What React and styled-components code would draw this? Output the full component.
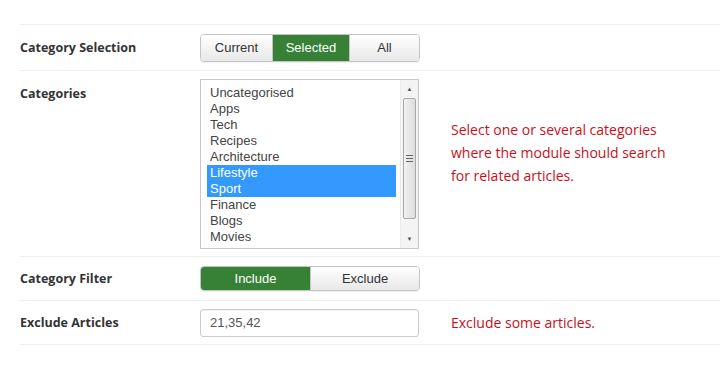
import React from "react";
import styled, { createGlobalStyle } from "styled-components";

const categories = [
  "Uncategorised",
  "Apps",
  "Tech",
  "Recipes",
  "Architecture",
  "Lifestyle",
  "Sport",
  "Finance",
  "Blogs",
  "Movies",
  "Nightlife",
];
const selected = ["Lifestyle", "Sport"];

const App = () => {
  return (
    <>
      <GlobalStyle />
      <Form>
        <Row $h={46}>
          <Label>Category Selection</Label>
          <BtnGroup $h={28}>
            <Btn $w={71}>Current</Btn>
            <Btn $w={77} $active>
              Selected
            </Btn>
            <Btn $w={70}>All</Btn>
          </BtnGroup>
        </Row>
        <Row $h={186} $tall>
          <Label $top>Categories</Label>
          <ListBox>
            <Options>
              {categories.map((c) => (
                <Option key={c} $on={selected.includes(c)}>
                  {c}
                </Option>
              ))}
            </Options>
            <ScrollBar>
              <Arrow>▲</Arrow>
              <Thumb>
                <Grip />
              </Thumb>
              <Track />
              <Arrow>▼</Arrow>
            </ScrollBar>
          </ListBox>
          <Help $multi>
            Select one or several categories
            <br />
            where the module should search
            <br />
            for related articles.
          </Help>
        </Row>
        <Row $h={44}>
          <Label>Category Filter</Label>
          <BtnGroup $h={25}>
            <Btn $w={109} $active>
              Include
            </Btn>
            <Btn $w={109}>Exclude</Btn>
          </BtnGroup>
        </Row>
        <Row $h={44}>
          <Label>Exclude Articles</Label>
          <Input defaultValue="21,35,42" />
          <Help>Exclude some articles.</Help>
        </Row>
      </Form>
    </>
  );
};

export default App;

const GlobalStyle = createGlobalStyle`
  body {
    margin: 0;
    background: #fff;
    font-family: "Liberation Sans", Arial, sans-serif;
  }
`;

const Form = styled.div`
  padding: 24px 0 0 20px;
`;

const Row = styled.div`
  display: flex;
  align-items: ${(p) => (p.$tall ? "flex-start" : "center")};
  border-top: 1px solid #eeeeee;
  height: ${(p) => p.$h}px;
  padding-top: ${(p) => (p.$tall ? "8px" : "0")};
  box-sizing: border-box;
  &:last-child {
    border-bottom: 1px solid #eeeeee;
    height: ${(p) => p.$h + 1}px;
  }
`;

const Label = styled.div`
  width: 180px;
  flex-shrink: 0;
  font-family: "Open Sans", Arial, sans-serif;
  font-weight: 700;
  font-size: 12.5px;
  color: #333;
  line-height: 18px;
  padding-top: ${(p) => (p.$top ? "6px" : "0")};
`;

const BtnGroup = styled.div`
  display: flex;
  width: 220px;
  box-sizing: border-box;
  height: ${(p) => p.$h}px;
  border: 1px solid #c4c4c4;
  border-radius: 4px;
  overflow: hidden;
  box-shadow: 0 1px 1px rgba(0, 0, 0, 0.06);
`;

const Btn = styled.div`
  width: ${(p) => p.$w}px;
  flex-shrink: 0;
  box-sizing: border-box;
  display: flex;
  align-items: center;
  justify-content: center;
  font-size: 13px;
  color: ${(p) => (p.$active ? "#fff" : "#333")};
  background: ${(p) =>
    p.$active ? "#378137" : "linear-gradient(#ffffff, #e8e8e8)"};
  & + & {
    border-left: 1px solid #c4c4c4;
  }
`;

const ListBox = styled.div`
  width: 219px;
  height: 170px;
  flex-shrink: 0;
  box-sizing: border-box;
  border: 1px solid #c8c8c8;
  display: flex;
  overflow: hidden;
`;

const Options = styled.div`
  flex: 1;
  padding: 5px 4px 0 6px;
  overflow: hidden;
`;

const Option = styled.div`
  font-size: 13px;
  line-height: 16px;
  height: 16px;
  padding-left: 3px;
  color: ${(p) => (p.$on ? "#fff" : "#444")};
  background: ${(p) => (p.$on ? "#3399ff" : "transparent")};
  white-space: nowrap;
`;

const ScrollBar = styled.div`
  width: 17px;
  background: #f4f4f4;
  border-left: 1px solid #eaeaea;
  display: flex;
  flex-direction: column;
  align-items: center;
`;

const Arrow = styled.div`
  height: 18px;
  flex-shrink: 0;
  font-size: 6px;
  color: #555;
  display: flex;
  align-items: center;
  justify-content: center;
`;

const Thumb = styled.div`
  width: 13px;
  height: 121px;
  flex-shrink: 0;
  border: 1px solid #a8a8a8;
  border-radius: 2px;
  background: linear-gradient(90deg, #f2f2f2, #dcdcdc);
  display: flex;
  align-items: center;
  justify-content: center;
  box-sizing: border-box;
`;

const Track = styled.div`
  flex: 1;
`;

const Grip = styled.div`
  width: 7px;
  height: 7px;
  background: repeating-linear-gradient(
    #666 0,
    #666 1px,
    transparent 1px,
    transparent 3px
  );
`;

const Help = styled.div`
  margin-left: 32px;
  margin-top: ${(p) => (p.$multi ? "39px" : "0")};
  font-family: "Open Sans", Arial, sans-serif;
  font-size: 14px;
  line-height: 23px;
  color: #c8101a;
`;

const Input = styled.input`
  width: 219px;
  height: 28px;
  flex-shrink: 0;
  box-sizing: border-box;
  border: 1px solid #cccccc;
  border-radius: 3px;
  padding: 0 9px;
  font-family: "Liberation Sans", Arial, sans-serif;
  font-size: 13px;
  color: #555;
  outline: none;
  box-shadow: inset 0 1px 1px rgba(0, 0, 0, 0.06);
`;
